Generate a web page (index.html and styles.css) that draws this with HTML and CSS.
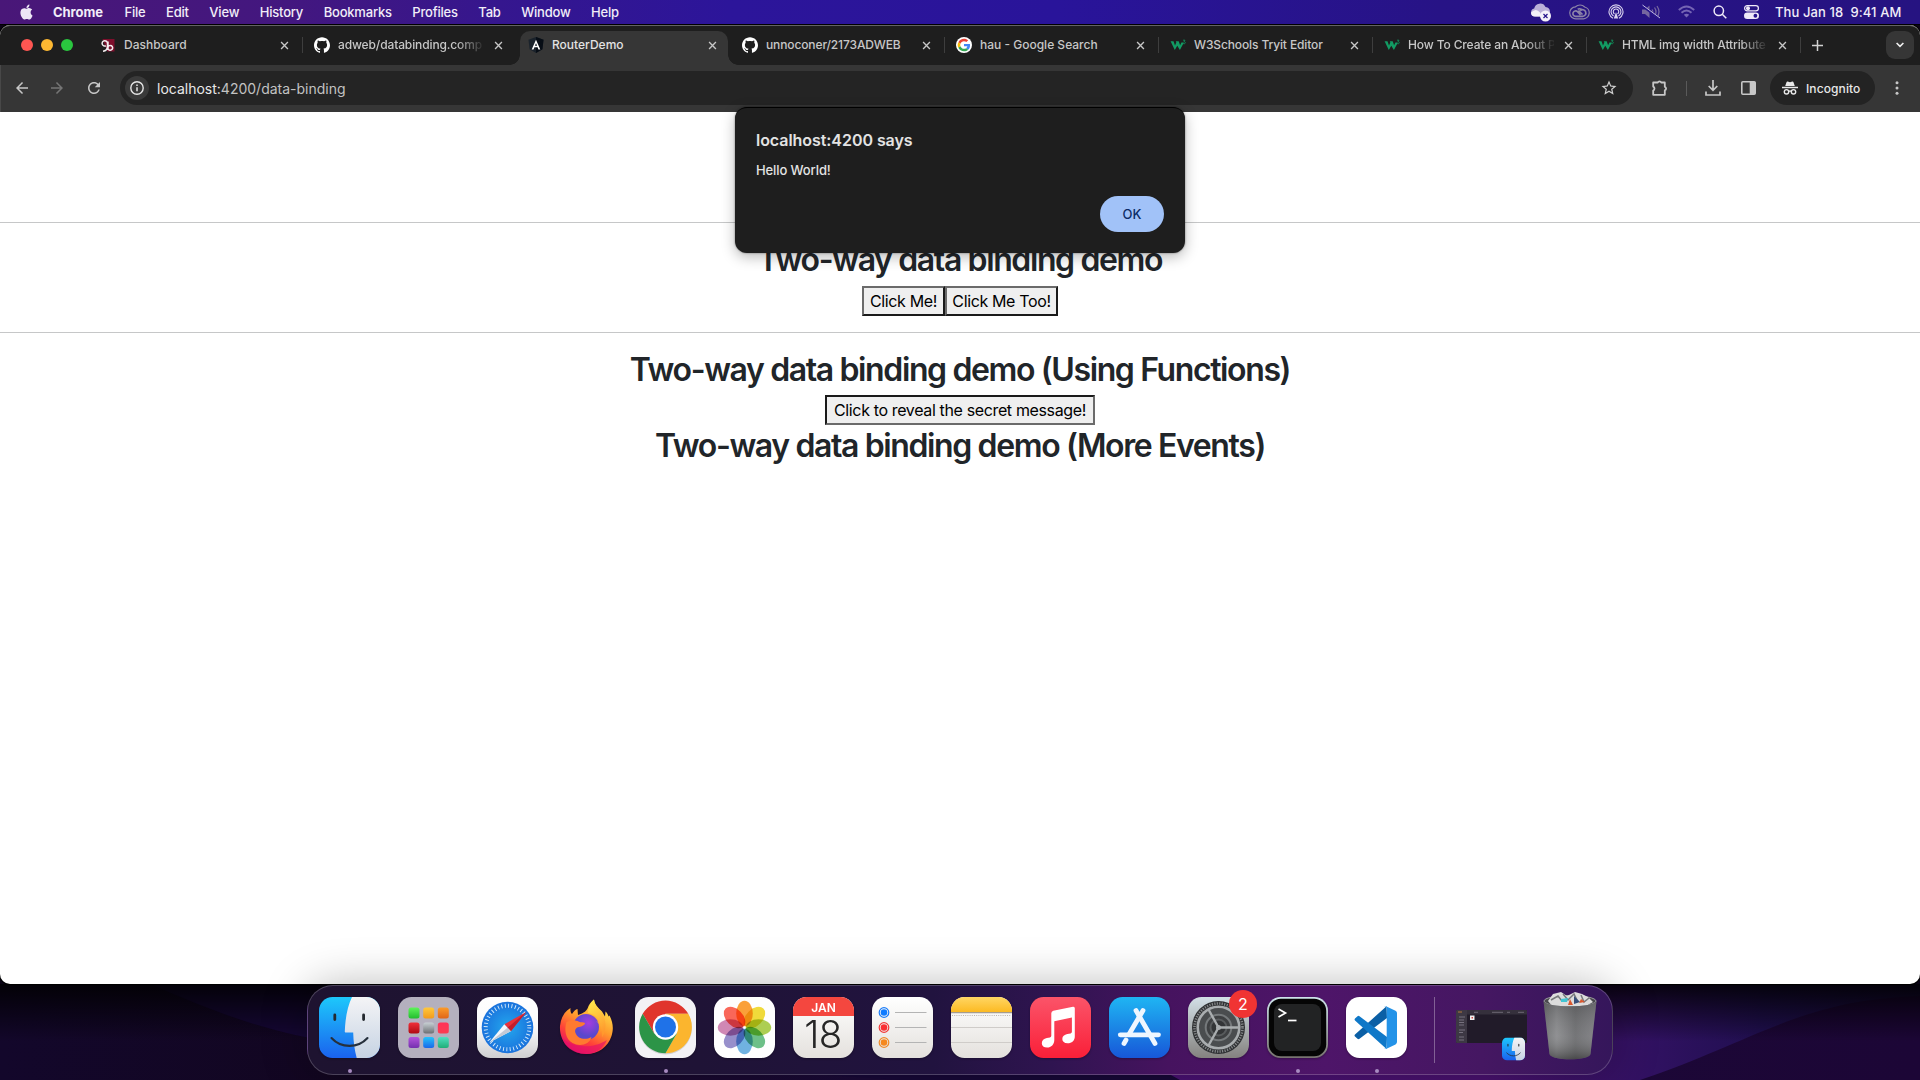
FILE: index.html
```html
<!DOCTYPE html>
<html lang="en">
<head>
<meta charset="utf-8">
<title>RouterDemo</title>
<link rel="stylesheet" href="styles.css">
</head>
<body>
<svg width="0" height="0" class="defs">
  <defs>
    <symbol id="close" viewBox="0 0 10 10"><path d="M1.2 1.2l7.6 7.6M8.8 1.2L1.2 8.8" stroke="#c7c7c7" stroke-width="1.5" fill="none"/></symbol>
    <symbol id="github" viewBox="0 0 24 24"><path fill="#fff" d="M12 .297c-6.63 0-12 5.373-12 12 0 5.303 3.438 9.8 8.205 11.385.6.113.82-.258.82-.577 0-.285-.01-1.04-.015-2.04-3.338.724-4.042-1.61-4.042-1.61C4.422 18.07 3.633 17.7 3.633 17.7c-1.087-.744.084-.729.084-.729 1.205.084 1.838 1.236 1.838 1.236 1.07 1.835 2.809 1.305 3.495.998.108-.776.417-1.305.76-1.605-2.665-.3-5.466-1.332-5.466-5.93 0-1.31.465-2.38 1.235-3.22-.135-.303-.54-1.523.105-3.176 0 0 1.005-.322 3.3 1.23.96-.267 1.98-.399 3-.405 1.02.006 2.04.138 3 .405 2.28-1.552 3.285-1.23 3.285-1.23.645 1.653.24 2.873.12 3.176.765.84 1.23 1.91 1.23 3.22 0 4.61-2.805 5.625-5.475 5.92.42.36.81 1.096.81 2.22 0 1.606-.015 2.896-.015 3.286 0 .315.21.69.825.57C20.565 22.092 24 17.592 24 12.297c0-6.627-5.373-12-12-12"/></symbol>
    <symbol id="w3" viewBox="0 0 16 16"><path d="M.6 4.300h2.900l1.500 4.200 1.300-2.900-.5-1.300h2.900l1.400 4 1.300-2.800h2.500L9.900 13 7.300 8.800 4.800 13z" fill="#129b63"/><path d="M13 3.200h2l-1 1.400c1 0 1.400.6 1.300 1.200-.1.800-1 1.200-2.100.8" fill="none" stroke="#129b63" stroke-width=".8"/></symbol>
    <symbol id="finder" viewBox="0 0 61 61">
      <linearGradient id="fb" x2="0" y2="1"><stop stop-color="#1dc8fb"/><stop offset="1" stop-color="#1a62ee"/></linearGradient>
      <linearGradient id="fw" x2="0" y2="1"><stop stop-color="#f4f4f6"/><stop offset="1" stop-color="#c6d3e3"/></linearGradient>
      <rect width="61" height="61" rx="13.500" fill="url(#fb)"/>
      <path d="M33 0h14.500A13.500 13.500 0 0 1 61 13.500v34A13.500 13.500 0 0 1 47.500 61h-9.800C35.500 53 34.400 44 34.200 35.500h-7.300c-.8 0-1.200-.5-1.100-1.300C26.300 21 28.600 9 33 0z" fill="url(#fw)"/>
      <path d="M15.800 18v4.500M44.600 18v4.500" stroke="#24292f" stroke-width="2.800" stroke-linecap="round"/>
      <path d="M12.500 41c9.500 10.500 26.500 10.500 36 0" fill="none" stroke="#26303c" stroke-width="2.100" stroke-linecap="round"/>
    </symbol>
    <linearGradient id="paper" x2="0" y2="1"><stop stop-color="#fff"/><stop offset="1" stop-color="#e4e1dd"/></linearGradient>
  </defs>
</svg>

<div class="desktop">
  <svg class="wallpaper" viewBox="0 0 1920 96" preserveAspectRatio="none">
    <defs>
      <linearGradient id="w1"><stop stop-color="#13072b"/><stop offset=".2" stop-color="#12061f"/><stop offset=".45" stop-color="#1b0a38"/><stop offset="1" stop-color="#1c0636"/></linearGradient>
      <linearGradient id="w2"><stop stop-color="#4a1175"/><stop offset=".5" stop-color="#4a1270"/><stop offset=".7" stop-color="#2f1160"/><stop offset=".82" stop-color="#200f50"/><stop offset="1" stop-color="#190b3c"/></linearGradient>
      <linearGradient id="w3g" x2="0" y2="1"><stop stop-color="#000" stop-opacity=".85"/><stop offset=".6" stop-color="#000" stop-opacity="0"/></linearGradient>
    </defs>
    <rect width="1920" height="96" fill="url(#w1)"/>
    <path d="M150 0C220 30 260 45 320 56L900 96H1180L1080 0z" fill="#170838"/>
    <path d="M1050 0Q1110 60 1180 96H1640C1760 55 1800 16 1920 12V0z" fill="url(#w2)"/>
    <rect width="1920" height="96" fill="url(#w3g)"/>
  </svg>

  <header class="menubar">
    <svg class="apple" viewBox="0 0 24 24"><path fill="#ece6f5" d="M12.152 6.896c-.948 0-2.415-1.078-3.96-1.04-2.04.027-3.91 1.183-4.961 3.014-2.117 3.675-.546 9.103 1.519 12.09 1.013 1.454 2.208 3.09 3.792 3.039 1.52-.065 2.09-.987 3.935-.987 1.831 0 2.35.987 3.96.948 1.637-.026 2.676-1.48 3.676-2.948 1.156-1.688 1.636-3.325 1.662-3.415-.039-.013-3.182-1.221-3.22-4.857-.026-3.04 2.48-4.494 2.597-4.559-1.429-2.09-3.623-2.324-4.39-2.376-2-.156-3.675 1.09-4.61 1.09zM15.53 3.83c.843-1.012 1.4-2.427 1.245-3.83-1.207.052-2.662.805-3.532 1.818-.78.896-1.454 2.338-1.273 3.714 1.338.104 2.715-.688 3.559-1.701"/></svg>
    <nav class="menus"><b>Chrome</b><span>File</span><span>Edit</span><span>View</span><span>History</span><span>Bookmarks</span><span>Profiles</span><span>Tab</span><span>Window</span><span>Help</span></nav>
    <div class="status">
      <svg width="22" height="20" viewBox="0 0 22 20"><path d="M5 14.500a4 4 0 0 1-.8-7.900A6 6 0 0 1 15.500 5a5 5 0 0 1 4.500 5l-3 4.500z" fill="#bab0d8"/><path d="M1 10.500q5-5 9 0l2 4H5a4 4 0 0 1-4-4z" fill="#f3f0f8"/><circle cx="15.500" cy="14" r="5.500" fill="#f5f2fa"/><path d="M13.500 12l4 4m0-4l-4 4" stroke="#26148a" stroke-width="1.200"/></svg>
      <svg width="21" height="16" viewBox="0 0 21 16" fill="none" stroke="#8c84a8"><path d="M6.500 2.800A6 6 0 0 0 7 14.800h7.500a6 6 0 0 0 1.200-11.800A6.500 6.500 0 0 0 6.500 2.800z" stroke-width="1.200"/><path d="M11.500 11L8.500 7.700A2.700 2.700 0 1 0 6.800 12.300h6.700a3.300 3.300 0 1 0-2.300-5.600M8.700 5.200A3.600 3.600 0 0 1 12.500 5.500M9.500 6.500L13.500 10.500" stroke-width="1.700"/></svg>
      <svg width="16" height="16" viewBox="0 0 16 16" fill="none" stroke="#d9d3ee" stroke-width="1.100"><path d="M5 14.200a7 7 0 1 1 6 0M5.600 12a4.900 4.900 0 1 1 4.800 0M6.500 10a2.700 2.700 0 1 1 3 0"/><path d="M8 8l2.200 6.500H5.800z" fill="#d9d3ee" stroke="none"/></svg>
      <svg width="20" height="16" viewBox="0 0 20 16" fill="none" stroke="#75669f" stroke-width="1.300"><path d="M1 5.500h3l4.500-4v12.500l-4.500-4H1z" fill="#75669f" stroke="none"/><path d="M11 5.500q1.500 2.300 0 4.700M13.500 3.500q3 4.300 0 8.700M16 2q4 5.900 0 11.500"/><path d="M1 1.500l17.500 13" stroke="#26148a" stroke-width="2.500"/><path d="M1.500 1l17.500 13" stroke="#c3bbe0" stroke-width="1"/></svg>
      <svg width="17" height="13" viewBox="0 0 17 13" fill="none" stroke="#7565b4" stroke-width="1.900"><path d="M.8 5q7.700-7 15.400 0M3.500 7.800q5-4.500 10 0"/><path d="M5.800 9.800q2.700-2.200 5.400 0L8.500 12.500z" fill="#7565b4" stroke="none"/></svg>
      <svg width="14" height="14" viewBox="0 0 14 14" fill="none" stroke="#efeaf8" stroke-width="1.500"><circle cx="5.800" cy="5.800" r="4.700"/><path d="M9.300 9.300l4 4"/></svg>
      <svg width="15" height="14" viewBox="0 0 15 14"><rect x=".6" y=".6" width="13.800" height="5.200" rx="2.600" fill="none" stroke="#efeaf8" stroke-width="1.200"/><circle cx="4" cy="3.200" r="2" fill="#efeaf8"/><rect y="7.500" width="15" height="6.500" rx="3.250" fill="#efeaf8"/><circle cx="11.400" cy="10.750" r="1.900" fill="#26148a"/></svg>
      <span class="clock">Thu Jan 18&nbsp; 9:41 AM</span>
    </div>
  </header>

  <main class="window">
    <div class="tabstrip">
      <div class="lights"><i class="red"></i><i class="yellow"></i><i class="green"></i></div>
      <div class="tab"><svg class="fav" viewBox="0 0 16 16"><path d="M2.500 2h12v12.500h-7z" fill="#7d0f2c"/><path d="M7.500 6.500a2.700 2.700 0 1 0-1.500 2.300M7.500 5v4c0 3-2 5-4.500 5.300M8 4.500v8.500M8 10a2.400 2.400 0 1 1 .5 2.500" fill="none" stroke="#f4eef0" stroke-width="1.500"/></svg><span class="title">Dashboard</span><svg class="x"><use href="#close"/></svg></div>
      <div class="tab nosep"><svg class="fav"><use href="#github"/></svg><span class="title fade">adweb/databinding.comp</span><svg class="x"><use href="#close"/></svg></div>
      <div class="tab active nosep"><svg class="fav" viewBox="0 0 16 16"><path d="M8 0l7.500 2.700-1.100 9.600L8 16l-6.400-3.700L.5 2.700z" fill="#1a222b"/><path d="M8 0l7.500 2.700-1.100 9.600L8 16z" fill="#070d15"/><path d="M8 2.800l4.300 9.700h-1.900L9.600 10.200H6.400l-.9 2.300H3.700zM8 6.200L6.900 8.800h2.200z" fill="#fff" fill-rule="evenodd"/></svg><span class="title">RouterDemo</span><svg class="x"><use href="#close"/></svg></div>
      <div class="tab"><svg class="fav"><use href="#github"/></svg><span class="title tight">unnoconer/2173ADWEB</span><svg class="x"><use href="#close"/></svg></div>
      <div class="tab"><svg class="fav" viewBox="0 0 48 48"><circle cx="24" cy="24" r="24" fill="#fff"/><g transform="translate(5 5) scale(.79)"><path fill="#EA4335" d="M24 9.500c3.540 0 6.710 1.220 9.210 3.600l6.850-6.850C35.900 2.380 30.470 0 24 0 14.620 0 6.510 5.380 2.560 13.220l7.980 6.190C12.430 13.720 17.740 9.500 24 9.500z"/><path fill="#4285F4" d="M46.980 24.550c0-1.570-.15-3.090-.38-4.550H24v9.020h12.940c-.58 2.960-2.260 5.480-4.780 7.180l7.730 6c4.510-4.180 7.090-10.360 7.090-17.650z"/><path fill="#FBBC05" d="M10.530 28.590A14.500 14.500 0 0 1 9.770 24c0-1.600.27-3.140.76-4.590l-7.980-6.190A24 24 0 0 0 0 24c0 3.880.92 7.540 2.560 10.780l7.970-6.190z"/><path fill="#34A853" d="M24 48c6.480 0 11.930-2.130 15.890-5.810l-7.730-6c-2.150 1.450-4.920 2.300-8.160 2.300-6.260 0-11.570-4.220-13.470-9.910l-7.980 6.190C6.510 42.620 14.620 48 24 48z"/></g></svg><span class="title">hau - Google Search</span><svg class="x"><use href="#close"/></svg></div>
      <div class="tab"><svg class="fav"><use href="#w3"/></svg><span class="title tight">W3Schools Tryit Editor</span><svg class="x"><use href="#close"/></svg></div>
      <div class="tab"><svg class="fav"><use href="#w3"/></svg><span class="title fade">How To Create an About P</span><svg class="x"><use href="#close"/></svg></div>
      <div class="tab"><svg class="fav"><use href="#w3"/></svg><span class="title fade">HTML img width Attribute</span><svg class="x"><use href="#close"/></svg></div>
      <svg class="plus" viewBox="0 0 11 11"><path d="M5.500 0v11M0 5.500h11" stroke="#d2d2d2" stroke-width="1.500"/></svg>
      <div class="search-tabs"><svg width="8" height="6" viewBox="0 0 8 6"><path d="M.6 1L4 4.300 7.400 1" fill="none" stroke="#f0f0f0" stroke-width="1.600"/></svg></div>
    </div>

    <div class="toolbar">
      <svg class="tb back" viewBox="0 0 24 24"><path fill="#c7c7c7" d="M20 11H7.830l5.590-5.590L12 4l-8 8 8 8 1.410-1.410L7.830 13H20v-2z"/></svg>
      <svg class="tb fwd" viewBox="0 0 24 24"><path fill="#757575" d="M12 4l-1.410 1.410L16.170 11H4v2h12.170l-5.580 5.590L12 20l8-8z"/></svg>
      <svg class="tb reload" viewBox="0 0 24 24"><path fill="#c7c7c7" d="M17.650 6.350C16.200 4.900 14.210 4 12 4c-4.420 0-7.990 3.580-7.990 8s3.570 8 7.990 8c3.730 0 6.840-2.550 7.730-6h-2.080c-.82 2.330-3.040 4-5.650 4-3.310 0-6-2.690-6-6s2.690-6 6-6c1.660 0 3.140.69 4.220 1.780L13 11h7V4l-2.350 2.350z"/></svg>
      <div class="omnibox">
        <span class="info"><svg width="14" height="14" viewBox="0 0 14 14"><circle cx="7" cy="7" r="6.200" fill="none" stroke="#e6e6e6" stroke-width="1.400"/><path d="M7 6.200v4M7 3.600v1.500" stroke="#e6e6e6" stroke-width="1.500"/></svg></span>
        <span class="url"><em>localhost:</em>4200/data-binding</span>
        <svg class="star" viewBox="0 0 24 24"><path fill="#d0d0d0" d="M22 9.240l-7.190-.62L12 2 9.190 8.630 2 9.240l5.460 4.730L5.820 21 12 17.270 18.180 21l-1.630-7.030L22 9.240zM12 15.400l-3.760 2.270 1-4.280-3.320-2.880 4.380-.38L12 6.100l1.710 4.040 4.380.38-3.320 2.880 1 4.280L12 15.400z"/></svg>
      </div>
      <svg class="puzzle" viewBox="0 0 18 18"><path d="M2.200 3.500h4.600a1.800 1.800 0 0 1 3.400 0h3.600v4.300a1.900 1.900 0 0 1 0 3.600v4.400H2.200v-4.200a2.200 2.200 0 0 0 0-4z" fill="none" stroke="#c7c7c7" stroke-width="1.800" stroke-linejoin="round"/></svg>
      <i class="tsep"></i>
      <svg class="download" viewBox="0 0 16 16"><path d="M8 0v10M3.700 6L8 10.300 12.300 6M1 11.500V15h14v-3.500" fill="none" stroke="#c7c7c7" stroke-width="1.700"/></svg>
      <svg class="panel" viewBox="0 0 15 14"><rect x=".8" y=".8" width="13.400" height="12.400" rx="1" fill="none" stroke="#c7c7c7" stroke-width="1.600"/><path d="M8.700 1h5.500v12H8.700z" fill="#c7c7c7"/></svg>
      <div class="incognito"><svg width="16" height="14" viewBox="0 0 16 14"><path d="M3.200 5L4.600 1q.3-.8 1.100-.5L8 1.200l2.300-.7q.8-.3 1.100.5l1.400 4z" fill="#e8e8e8"/><path d="M0 6.500h16" stroke="#e8e8e8" stroke-width="1.500"/><g fill="none" stroke="#e8e8e8" stroke-width="1.400"><circle cx="4.500" cy="10.800" r="2.200"/><circle cx="11.500" cy="10.800" r="2.200"/><path d="M6.700 10.300q1.300-.8 2.600 0"/></g></svg><span>Incognito</span></div>
      <svg class="dots" viewBox="0 0 4 14" fill="#c7c7c7"><circle cx="2" cy="1.800" r="1.500"/><circle cx="2" cy="7" r="1.500"/><circle cx="2" cy="12.200" r="1.500"/></svg>
    </div>

    <section class="page">
      <hr>
      <h2 class="first">Two-way data binding demo</h2>
      <div class="btns"><button class="b1">Click Me!</button><button class="b2">Click Me Too!</button></div>
      <hr>
      <h2>Two-way data binding demo (Using Functions)</h2>
      <div class="btns"><button class="b3 pressed">Click to reveal the secret message!</button></div>
      <h2>Two-way data binding demo (More Events)</h2>
    </section>

    <div class="dialog" role="dialog">
      <strong>localhost:4200 says</strong>
      <p>Hello World!</p>
      <div class="ok">OK</div>
    </div>
  </main>

  <footer class="dock">
    <div class="app on"><svg viewBox="0 0 61 61"><use href="#finder"/></svg></div>
    <div class="app"><svg viewBox="0 0 61 61"><rect width="61" height="61" rx="13.500" fill="#b4b0be"/>
      <defs><linearGradient id="l1" x2="0" y2="1"><stop stop-color="#5ff35a"/><stop offset="1" stop-color="#22bd2e"/></linearGradient><linearGradient id="l2" x2="0" y2="1"><stop stop-color="#ffc83c"/><stop offset="1" stop-color="#f39a1c"/></linearGradient><linearGradient id="l3" x2="0" y2="1"><stop stop-color="#fb9b2a"/><stop offset="1" stop-color="#e06519"/></linearGradient><linearGradient id="l4" x2="0" y2="1"><stop stop-color="#f0303a"/><stop offset="1" stop-color="#b00a12"/></linearGradient><linearGradient id="l5" x2="0" y2="1"><stop stop-color="#c8d0d4"/><stop offset="1" stop-color="#6c7074"/></linearGradient><linearGradient id="l6" x2="0" y2="1"><stop stop-color="#ff3357"/><stop offset="1" stop-color="#fb3d51"/></linearGradient><linearGradient id="l7" x2="0" y2="1"><stop stop-color="#b354dc"/><stop offset="1" stop-color="#7430ae"/></linearGradient><linearGradient id="l8" x2="0" y2="1"><stop stop-color="#25c2fa"/><stop offset="1" stop-color="#1a68ea"/></linearGradient><linearGradient id="l9" x2="0" y2="1"><stop stop-color="#4fe0c0"/><stop offset="1" stop-color="#20ae78"/></linearGradient></defs>
      <rect x="10.500" y="10.500" width="11" height="11" rx="2.500" fill="url(#l1)"/><rect x="25.200" y="10.500" width="11" height="11" rx="2.500" fill="url(#l2)"/><rect x="39.800" y="10.500" width="11" height="11" rx="2.500" fill="url(#l3)"/>
      <rect x="10.500" y="25.500" width="11" height="11" rx="2.500" fill="url(#l4)"/><rect x="25.200" y="25.500" width="11" height="11" rx="2.500" fill="url(#l5)"/><rect x="39.800" y="25.500" width="11" height="11" rx="2.500" fill="url(#l6)"/>
      <rect x="10.500" y="40" width="11" height="11" rx="2.500" fill="url(#l7)"/><rect x="25.200" y="40" width="11" height="11" rx="2.500" fill="url(#l8)"/><rect x="39.800" y="40" width="11" height="11" rx="2.500" fill="url(#l9)"/></svg></div>
    <div class="app"><svg viewBox="0 0 61 61"><defs><linearGradient id="s1" x2="0" y2="1"><stop stop-color="#fff"/><stop offset=".5" stop-color="#fafafa"/><stop offset="1" stop-color="#cfcfd1"/></linearGradient><radialGradient id="s2"><stop stop-color="#23a7ee"/><stop offset="1" stop-color="#1a72dc"/></radialGradient></defs><rect width="61" height="61" rx="13.500" fill="url(#s1)"/><circle cx="30.500" cy="30.500" r="25.800" fill="url(#s2)"/><circle cx="30.500" cy="30.500" r="21.800" fill="none" stroke="#d9ecfb" stroke-width="4" stroke-dasharray=".9 2.524"/><path d="M49.300 15L33.800 34.300 27.300 27.300z" fill="#e8323a"/><path d="M49.300 15L33.800 34.300 30.500 30.800z" fill="#c01e2c"/><path d="M12.300 45.500L27.300 27.300 33.800 34.300z" fill="#f4f6fa"/><path d="M12.300 45.500L30.500 30.800 33.800 34.300z" fill="#c2cad6"/></svg></div>
    <div class="app"><svg viewBox="0 0 61 61"><defs><linearGradient id="x1" x1=".8" y1=".1" x2=".3" y2="1"><stop stop-color="#ffe04a"/><stop offset=".4" stop-color="#ff9a2c"/><stop offset=".7" stop-color="#ff4238"/><stop offset="1" stop-color="#e30b6b"/></linearGradient><radialGradient id="x2" cx=".6" cy=".35"><stop stop-color="#a63ce0"/><stop offset="1" stop-color="#5a48cc"/></radialGradient><linearGradient id="x3" x2=".3" y2="1"><stop stop-color="#fff04e"/><stop offset="1" stop-color="#ff9a2e"/></linearGradient></defs><path d="M4 29C5 20 9 14 14.500 11c-.3 3 .3 5 1.500 6 2-3 3.500-4.500 5.500-5l.5 6c6-2 9-4 10.500-9C34 6 36 4 38 2.500c.5 5 4 8 8 12l3 5 .5-5c1.500 1 2.500 3 3 5l1-1C57.500 26 57.500 33 55.500 39 52 50 42 57 30.500 57 15 57 3 45 4 29z" fill="url(#x1)"/><circle cx="30" cy="30" r="13" fill="url(#x2)"/><path d="M10.500 25c5-2.500 9-2 12.500-.3 2 .8 4.500.3 6 1.300 0 2-3 3.500-6 4-3.500.8-4.500 3-3.500 6 2 6 10 7.500 16 4-2 8-12 10-19 6-7-4-8.500-13-6-21z" fill="#ff7a30"/><path d="M38 2.500c.5 5 4 8 7 12 5 7 6.500 17 1 26 1-7-1-13-6-16.500 3 1 4.500 3 5 5-1-8-7-12-13-13 0-5 2-10 6-13.500z" fill="url(#x3)"/><path d="M6 40c6 9 28 14 45 3-4 9-12 14-21 14C18 57 8 50 6 40z" fill="#e5106a" opacity=".65"/></svg></div>
    <div class="app on"><svg viewBox="0 0 61 61"><rect width="61" height="61" rx="13.500" fill="#f3f2f5"/><circle cx="30.500" cy="31" r="26.500" fill="#0002"/><path d="M7.700 16.800A26.300 26.300 0 0 1 53.300 16.800H30.500L19.200 36.500z" fill="#e0352c"/><path d="M53.300 16.800A26.300 26.300 0 0 1 30.500 56.300L41.800 36.500 30.500 16.800z" fill="#fbb52e"/><path d="M7.700 16.800A26.300 26.300 0 0 0 30.500 56.300L41.800 36.500H19.200z" fill="#2c9447"/><circle cx="30.500" cy="30" r="12.700" fill="#fff"/><circle cx="30.500" cy="30" r="10.500" fill="#1f72e8"/></svg></div>
    <div class="app"><svg viewBox="0 0 61 61"><rect width="61" height="61" rx="13.500" fill="#fefefe"/><g class="petals"><ellipse cx="30.500" cy="16.500" rx="8.300" ry="12.700" fill="#fb9a2a"/><ellipse cx="30.500" cy="16.500" rx="8.300" ry="12.700" fill="#f0d92c" transform="rotate(45 30.500 30.500)"/><ellipse cx="30.500" cy="16.500" rx="8.300" ry="12.700" fill="#a8cc45" transform="rotate(90 30.500 30.500)"/><ellipse cx="30.500" cy="16.500" rx="8.300" ry="12.700" fill="#62bd80" transform="rotate(135 30.500 30.500)"/><ellipse cx="30.500" cy="16.500" rx="8.300" ry="12.700" fill="#65ade0" transform="rotate(180 30.500 30.500)"/><ellipse cx="30.500" cy="16.500" rx="8.300" ry="12.700" fill="#9088c8" transform="rotate(225 30.500 30.500)"/><ellipse cx="30.500" cy="16.500" rx="8.300" ry="12.700" fill="#ce80b0" transform="rotate(270 30.500 30.500)"/><ellipse cx="30.500" cy="16.500" rx="8.300" ry="12.700" fill="#fa5b4c" transform="rotate(315 30.500 30.500)"/></g></svg></div>
    <div class="app"><svg viewBox="0 0 61 61"><rect width="61" height="61" rx="13.500" fill="url(#paper)"/><path d="M0 19v-5.500A13.500 13.500 0 0 1 13.500 0h34A13.500 13.500 0 0 1 61 13.500V19z" fill="#f4473f"/><text x="30.500" y="14.800" class="cal-m">JAN</text><text x="30" y="51.300" class="cal-d">18</text></svg></div>
    <div class="app"><svg viewBox="0 0 61 61"><rect width="61" height="61" rx="13.500" fill="url(#paper)"/><path d="M23 15.500h31.500M23 30.500h31.500M23 45.500h31.500" stroke="#b4b4b4"/><g stroke-width="1.200" fill="none"><circle cx="12" cy="15.500" r="4.800" stroke="#1a7cf8"/><circle cx="12" cy="30.500" r="4.800" stroke="#f23838"/><circle cx="12" cy="45.500" r="4.800" stroke="#f08a28"/></g><circle cx="12" cy="15.500" r="3.300" fill="#0f7bff"/><circle cx="12" cy="30.500" r="3.300" fill="#f92f33"/><circle cx="12" cy="45.500" r="3.300" fill="#f5881e"/></svg></div>
    <div class="app"><svg viewBox="0 0 61 61"><defs><linearGradient id="n1" x2="0" y2="1"><stop stop-color="#ffd664"/><stop offset="1" stop-color="#fcba22"/></linearGradient></defs><rect width="61" height="61" rx="13.500" fill="url(#paper)"/><path d="M0 15v-1.500A13.500 13.500 0 0 1 13.500 0h34A13.500 13.500 0 0 1 61 13.500V15z" fill="url(#n1)"/><path d="M0 15.600h61" stroke="#a59c8e" stroke-width="1.200"/><path d="M1 18.500h59" stroke="#b9b4ad" stroke-width="1" stroke-dasharray="1 1.200"/><path d="M0 30.500h61M0 45.500h61" stroke="#cfccc9"/></svg></div>
    <div class="app"><svg viewBox="0 0 61 61"><defs><linearGradient id="m1" x2="0" y2="1"><stop stop-color="#fb5469"/><stop offset="1" stop-color="#fa1f38"/></linearGradient></defs><rect width="61" height="61" rx="13.500" fill="url(#m1)"/><path d="M21.300 16.300q0-2 2-2.500L43 9.700q1.800-.3 1.800 1.500v28.300c0 4.200-3 6.700-7.200 6.800-3.300 0-5.300-1.800-5.300-4.300 0-2.700 2-4.300 5-4.900l3.300-.7q1.300-.3 1.300-1.700V20.500l-17.600 3.700V43c0 4.500-3 7.500-7.200 7.600-3.300 0-5.300-1.900-5.300-4.400 0-2.700 2-4.500 5-5.100l3.200-.7q1.300-.3 1.300-1.700z" fill="#fff"/></svg></div>
    <div class="app"><svg viewBox="0 0 61 61"><defs><linearGradient id="a1" x2="0" y2="1"><stop stop-color="#1fb5f3"/><stop offset="1" stop-color="#1757d8"/></linearGradient></defs><rect width="61" height="61" rx="13.500" fill="url(#a1)"/><g fill="none" stroke="#eef6ff" stroke-width="4.800" stroke-linecap="round"><path d="M11.300 37.800H49.500"/><path d="M34 13.500L20.500 36.500M17 43L15 46.500"/><path d="M27 13.500L46 46.500"/></g></svg></div>
    <div class="app"><svg viewBox="0 0 61 61"><defs><linearGradient id="g1" x2="0" y2="1"><stop stop-color="#d3e0e7"/><stop offset="1" stop-color="#84827f"/></linearGradient></defs><rect width="61" height="61" rx="13.500" fill="url(#g1)"/><circle cx="30.500" cy="30.500" r="26.500" fill="#303234"/><circle cx="30.500" cy="30.500" r="24" fill="none" stroke="#85888a" stroke-width="2.600" stroke-dasharray="1.200 1.313"/><circle cx="30.500" cy="30.500" r="20.800" fill="#4a4d4f" stroke="#a9adaf" stroke-width="2.600"/><circle cx="30.500" cy="30.500" r="12.800" fill="#3e4042" stroke="#75797b" stroke-width="2"/><circle cx="30.500" cy="30.500" r="8" fill="#333537" stroke="#585b5d" stroke-width="2"/><path d="M30.500 30.500H51M30.500 30.500L20.500 12.500M30.500 30.500L20.500 48.500" stroke="#a9adaf" stroke-width="2.400"/><circle cx="30.500" cy="30.500" r="2.500" fill="#a9adaf"/></svg><span class="badge">2</span></div>
    <div class="app on"><svg viewBox="0 0 61 61"><defs><linearGradient id="t1" x2="0" y2="1"><stop stop-color="#cfe4ec"/><stop offset="1" stop-color="#77736f"/></linearGradient></defs><rect width="61" height="61" rx="13.500" fill="url(#t1)"/><rect x="1.800" y="1.800" width="57.400" height="57.400" rx="12" fill="#050505"/><rect x="7" y="7" width="47" height="47" rx="8" fill="#222324"/><path d="M11.500 12l7 4-7 4" fill="none" stroke="#fff" stroke-width="1.700"/><path d="M21 23.500h8.500" stroke="#fff" stroke-width="1.700"/></svg></div>
    <div class="app on"><svg viewBox="0 0 61 61"><rect width="61" height="61" rx="13.500" fill="#fff"/><path d="M40.500 9.300L9 37.500q-1 1 0 2l2.500 2.300q1 .8 2 0L41 21z" fill="#0b5fa5"/><path d="M40.500 52L9 23.500q-1-1 0-2l2.500-2.300q1-.8 2 0L41 40z" fill="#0f78c8"/><path d="M38 51.200q1 1 2.500.5l9-4.300q1.500-.8 1.500-2.300V16q0-1.500-1.500-2.300l-9-4.300q-1.500-.5-2.500.5 2.500-1.500 2.700 1.600v38q-.2 3-2.700 1.700z" fill="#2393e8"/></svg></div>
    <i class="divider"></i>
    <div class="mini"><svg viewBox="0 0 71 53"><rect width="71" height="33" rx="1" fill="#211b29"/><path d="M0 1q0-1 1-1h10v33H1q-1 0-1-1z" fill="#3d3844"/><path d="M11 0h59q1 0 1 1v3.500H11z" fill="#35303c"/><path d="M2 2h4" stroke="#b3743c"/><path d="M3 7h6M3 10h5M3 12.500h5M3 15h5M3 20h6M3 22.500h4M3 27h5M3 30h5" stroke="#77717e"/><path d="M18 2.300h4M36 2.300h11M51 2.300h3M62 2.300h6" stroke="#6d6874"/><rect x="14" y="5.500" width="4.500" height="4.500" fill="#eee"/><rect x="15.500" y="7" width="1.500" height="1.500" fill="#c44"/><svg x="46" y="27.500" width="23" height="23" viewBox="0 0 61 61"><use href="#finder"/></svg></svg></div>
    <div class="trash"><svg viewBox="0 0 54 70"><defs><linearGradient id="tr"><stop stop-color="#68696c"/><stop offset=".25" stop-color="#8a8b8e"/><stop offset=".6" stop-color="#67686b"/><stop offset="1" stop-color="#7d7d82"/></linearGradient><linearGradient id="ts" x2="0" y2="1"><stop stop-color="#444" stop-opacity=".4"/><stop offset=".6" stop-color="#aaa" stop-opacity=".2"/><stop offset="1" stop-color="#333" stop-opacity=".6"/></linearGradient></defs><ellipse cx="27" cy="10" rx="26" ry="5.500" fill="#4a4a4e" stroke="#9b9b9f"/><path d="M5 10l5-7 8-2 6 4 8-4 7 2 6 3 5 5-7 4-33 1z" fill="#dcdcdc"/><path d="M8 9l7-4 4 5M20 3l5 6 6-6 4 8M38 4l3 7 5-4" fill="none" stroke="#77797c" stroke-width="1.500"/><path d="M18 8l7-1-1 4h-6z" fill="#42c5d3"/><path d="M27 8l3 6h-5zM38 8l4 3-6 1z" fill="#d8572e"/><path d="M31 5l6 6-6 2z" fill="#38507a"/><path d="M.5 10c2 7 51 7 53 0L47.500 63c-1 7-39.500 7-41 0z" fill="url(#tr)"/><path d="M.5 10c2 7 51 7 53 0L47.500 63c-1 7-39.500 7-41 0z" fill="url(#ts)"/></svg></div>
  </footer>
</div>
</body>
</html>
```
FILE: styles.css
```css
* { box-sizing: border-box; }
body { margin: 0; overflow: hidden; background: #0b0416; font-family: Inter, "Liberation Sans", sans-serif; }
.defs { position: absolute; }
svg { display: block; flex: none; }
.desktop { position: relative; width: 1920px; height: 1080px; display: flex; flex-direction: column; align-items: center; }
.wallpaper { position: absolute; left: 0; bottom: 0; width: 1920px; height: 96px; }

/* menu bar */
.menubar { width: 100%; height: 25px; display: flex; align-items: center; padding: 0 18px 1px 19px; color: #f1edf8; font-size: 13px; font-weight: 500; background: linear-gradient(90deg, #491778, #43177f 15%, #35168e 26%, #2c159a 38%, #29149a 55%, #271386 75%, #261381); border-bottom: 1px solid #000; position: relative; }
.apple { width: 15px; height: 16px; margin-right: 19px; }
.menus { display: flex; gap: 20.500px; letter-spacing: -.2px; white-space: nowrap; }
.menus b { font-weight: 700; letter-spacing: -.05px; margin-right: 1px; }
.status { margin-left: auto; display: flex; align-items: center; gap: 17.400px; }
.clock { width: 127px; white-space: nowrap; letter-spacing: .1px; margin-left: -1.500px; }

/* browser window */
.window { position: relative; width: 100%; height: 959px; background: #fff; border-radius: 10px; box-shadow: 0 0 0 1px #000; }
.tabstrip { height: 40px; background: #1e1e1e; border-top: 1px solid #636363; border-radius: 10px 10px 0 0; display: flex; align-items: center; padding-right: 6px; }
.lights { width: 89px; padding-left: 21px; margin-bottom: 1px; display: flex; gap: 8px; }
.lights i { width: 12px; height: 12px; border-radius: 50%; }
.red { background: #fe5652; }
.yellow { background: #fdb832; }
.green { background: #2ac63f; }
.tab { position: relative; width: 214px; height: 39px; display: flex; align-items: center; padding: 0 0 1px 11px; color: #c7c7c7; font-size: 12px; font-weight: 500; }
.tab::after { content: ""; position: absolute; right: 0; top: 11px; width: 1.500px; height: 16px; background: #3e3e3e; }
.tab.nosep::after { display: none; }
.fav { width: 16px; height: 16px; position: relative; }
.title { width: 146px; margin-left: 8px; white-space: nowrap; position: relative; line-height: 16px; }
.title.tight { letter-spacing: -.12px; }
.title.fade { letter-spacing: -.12px; -webkit-mask-image: linear-gradient(90deg, #000 118px, rgba(0,0,0,.1) 144px); mask-image: linear-gradient(90deg, #000 118px, rgba(0,0,0,.1) 144px); }
.x { width: 9px; height: 9px; margin-left: 10px; position: relative; }
.tab.active { color: #e3e3e3; z-index: 1; }
.tab.active::before { content: ""; position: absolute; left: 3px; right: 3px; top: 5px; bottom: 0; background: #363636; border-radius: 10px 10px 0 0; }
.tab.active::after { display: block; left: -7px; right: -7px; top: auto; bottom: 0; width: auto; height: 10px; background: radial-gradient(circle at 0 0, transparent 9.500px, #363636 10px) left / 10px 10px no-repeat, radial-gradient(circle at 100% 0, transparent 9.500px, #363636 10px) right / 10px 10px no-repeat; }
.plus { width: 11px; height: 11px; margin: 0 0 1px 11px; }
.search-tabs { width: 28px; height: 28px; margin-left: auto; margin-bottom: 1px; border-radius: 9px; background: #363636; display: grid; place-items: center; }

.toolbar { height: 47px; padding-bottom: 1px; background: #363636; display: flex; align-items: center; border-left: 1px solid #484848; }
.tb { width: 18px; height: 18px; }
.back { margin-left: 12px; }
.fwd { margin-left: 17px; }
.reload { margin-left: 19px; }
.omnibox { width: 1513px; height: 34px; margin-left: 17px; padding: 0 15px 0 5px; border-radius: 17px; background: #242424; display: flex; align-items: center; }
.info { width: 24px; height: 24px; border-radius: 50%; background: #3a3a3a; display: grid; place-items: center; }
.url { margin-left: 8px; font-size: 14px; color: #c2c2c2; }
.url em { font-style: normal; color: #e8e8e8; }
.star { width: 18px; height: 18px; margin-left: auto; }
.puzzle { width: 18px; height: 18px; margin-left: 18px; }
.tsep { width: 1.500px; height: 15px; background: #5a5a5a; margin-left: 16.500px; }
.download { width: 16px; height: 16px; margin-left: 17.500px; }
.panel { width: 15px; height: 14px; margin-left: 20.500px; }
.incognito { width: 105px; height: 34px; margin-left: 14px; padding-left: 12px; border-radius: 17px; background: #232323; color: #e8e8e8; font-size: 12px; font-weight: 500; letter-spacing: .1px; display: flex; align-items: center; gap: 8px; }
.dots { width: 4px; height: 14px; margin-left: 20px; }

/* page content */
.page { padding-top: 94px; color: #212529; text-align: center; }
.page hr { margin: 16px 0; border: 0; border-top: 1px solid #c6c7c8; }
.page h2 { margin: 0 0 8px; height: 38.400px; font-size: 32px; font-weight: 560; line-height: 41.500px; letter-spacing: -1.380px; white-space: nowrap; }
.page h2.first { height: 39px; }
.btns { display: flex; justify-content: center; height: 30px; }
.btns button { height: 30px; padding: 0; font: 400 16px/24px Inter, sans-serif; letter-spacing: -.360px; color: #000; background: #efefef; border: 2px solid; border-color: #6b6b6b #1a1a1a #1a1a1a #6b6b6b; border-radius: 0; white-space: nowrap; }
.btns .pressed { border-color: #1a1a1a #6b6b6b #6b6b6b #1a1a1a; }
.b1 { width: 83px; }
.b2 { width: 113px; }
.b3 { width: 270px; }

/* alert, floats over toolbar and page */
.dialog { position: absolute; left: 735px; top: 82px; width: 450px; height: 146px; padding: 20px 21px 0; border-radius: 12px; background: #1e1e1e; border-top: 1px solid #000; color: #e3e3e3; box-shadow: 0 4px 14px rgba(0,0,0,.28), 0 0 2px rgba(0,0,0,.5); display: flex; flex-direction: column; }
.dialog strong { font-size: 16px; font-weight: 600; line-height: 24px; letter-spacing: -.05px; }
.dialog p { margin: 9px 0 0; font-size: 13px; font-weight: 500; line-height: 18px; letter-spacing: -.1px; }
.ok { width: 64px; height: 36px; margin: 17px 0 0; align-self: flex-end; border-radius: 18px; background: #a1c2f8; color: #0b2c66; font-size: 13px; font-weight: 500; display: grid; place-items: center; }

/* dock */
.dock { position: relative; width: 1306px; height: 90px; margin-top: 1px; padding: 11px 0 0 11px; display: flex; gap: 18px; border: 1px solid rgba(255,255,255,.2); border-radius: 26px; background: linear-gradient(90deg, #1e1330, #1f1336 30%, #21133f 48%, #2f1450 57%, #46135f 66%, #4e1569 78%, #451762 90%, #35165b); box-shadow: 0 0 46px rgba(0,0,0,.28); }
.app { position: relative; width: 61px; height: 61px; }
.app svg { width: 61px; height: 61px; filter: drop-shadow(0 1px 1px rgba(0,0,0,.3)); }
.app.on::after { content: ""; position: absolute; left: 28.500px; top: 72px; width: 4px; height: 4px; border-radius: 50%; background: #a78bc0; }
.petals ellipse { mix-blend-mode: multiply; opacity: .93; }
.cal-m { font: 600 12px Inter, sans-serif; fill: #fff; text-anchor: middle; }
.cal-d { font: 300 38.500px Inter, sans-serif; fill: #262626; text-anchor: middle; letter-spacing: -.5px; }
.badge { position: absolute; left: 41px; top: -7px; width: 28px; height: 28px; border-radius: 50%; background: #f03433; color: #fff; font-size: 16px; display: grid; place-items: center; }
.divider { width: 1px; height: 66px; margin-left: 9px; background: rgba(255,255,255,.32); }
.mini { width: 71px; height: 53px; margin: 13px 0 0 3px; }
.trash { width: 54px; height: 70px; margin: -6px 0 0 -2px; }
```
